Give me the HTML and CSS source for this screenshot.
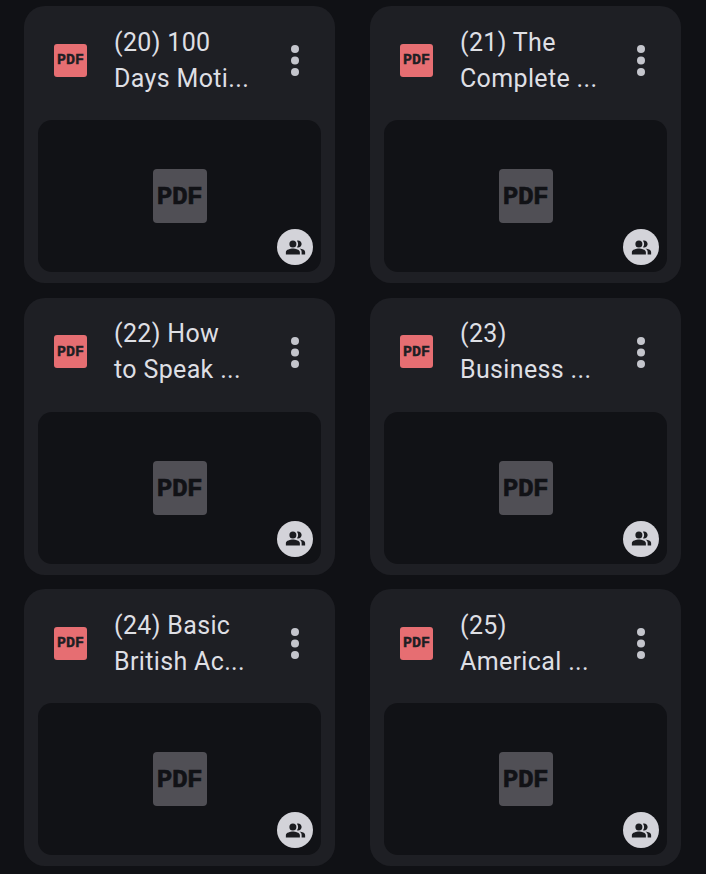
FILE: index.html
```html
<!DOCTYPE html>
<html lang="en">
<head>
<meta charset="utf-8">
<title>Files</title>
<link rel="stylesheet" href="styles.css">
</head>
<body>
<main class="grid">
  <article class="card">
    <header class="head">
      <span class="type-icon">PDF</span>
      <h2 class="title">(20) 100<br>Days Moti...</h2>
      <svg class="menu" viewBox="0 0 8 32"><circle cx="4" cy="4" r="4"/><circle cx="4" cy="15.5" r="4"/><circle cx="4" cy="27" r="4"/></svg>
    </header>
    <div class="thumb">
      <span class="thumb-icon">PDF</span>
      <span class="shared"><svg viewBox="0 0 24 24"><path d="M15 8c0-1.42-.5-2.73-1.33-3.76.42-.14.86-.24 1.33-.24 2.21 0 4 1.79 4 4s-1.79 4-4 4c-.43 0-.84-.09-1.23-.21-.03-.01-.06-.02-.1-.03A5.98 5.98 0 0 0 15 8zm1.66 5.13C18.03 14.06 19 15.32 19 17v3h4v-3c0-2.18-3.58-3.47-6.34-3.87zM9 4a4 4 0 1 0 0 8 4 4 0 0 0 0-8zm0 9c-2.67 0-8 1.34-8 4v3h16v-3c0-2.66-5.33-4-8-4z"/></svg></span>
    </div>
  </article>
  <article class="card">
    <header class="head">
      <span class="type-icon">PDF</span>
      <h2 class="title">(21) The<br>Complete ...</h2>
      <svg class="menu" viewBox="0 0 8 32"><circle cx="4" cy="4" r="4"/><circle cx="4" cy="15.5" r="4"/><circle cx="4" cy="27" r="4"/></svg>
    </header>
    <div class="thumb">
      <span class="thumb-icon">PDF</span>
      <span class="shared"><svg viewBox="0 0 24 24"><path d="M15 8c0-1.42-.5-2.73-1.33-3.76.42-.14.86-.24 1.33-.24 2.21 0 4 1.79 4 4s-1.79 4-4 4c-.43 0-.84-.09-1.23-.21-.03-.01-.06-.02-.1-.03A5.98 5.98 0 0 0 15 8zm1.66 5.13C18.03 14.06 19 15.32 19 17v3h4v-3c0-2.18-3.58-3.47-6.34-3.87zM9 4a4 4 0 1 0 0 8 4 4 0 0 0 0-8zm0 9c-2.67 0-8 1.34-8 4v3h16v-3c0-2.66-5.33-4-8-4z"/></svg></span>
    </div>
  </article>
  <article class="card">
    <header class="head">
      <span class="type-icon">PDF</span>
      <h2 class="title">(22) How<br>to Speak ...</h2>
      <svg class="menu" viewBox="0 0 8 32"><circle cx="4" cy="4" r="4"/><circle cx="4" cy="15.5" r="4"/><circle cx="4" cy="27" r="4"/></svg>
    </header>
    <div class="thumb">
      <span class="thumb-icon">PDF</span>
      <span class="shared"><svg viewBox="0 0 24 24"><path d="M15 8c0-1.42-.5-2.73-1.33-3.76.42-.14.86-.24 1.33-.24 2.21 0 4 1.79 4 4s-1.79 4-4 4c-.43 0-.84-.09-1.23-.21-.03-.01-.06-.02-.1-.03A5.98 5.98 0 0 0 15 8zm1.66 5.13C18.03 14.06 19 15.32 19 17v3h4v-3c0-2.18-3.58-3.47-6.34-3.87zM9 4a4 4 0 1 0 0 8 4 4 0 0 0 0-8zm0 9c-2.67 0-8 1.34-8 4v3h16v-3c0-2.66-5.33-4-8-4z"/></svg></span>
    </div>
  </article>
  <article class="card">
    <header class="head">
      <span class="type-icon">PDF</span>
      <h2 class="title">(23)<br>Business ...</h2>
      <svg class="menu" viewBox="0 0 8 32"><circle cx="4" cy="4" r="4"/><circle cx="4" cy="15.5" r="4"/><circle cx="4" cy="27" r="4"/></svg>
    </header>
    <div class="thumb">
      <span class="thumb-icon">PDF</span>
      <span class="shared"><svg viewBox="0 0 24 24"><path d="M15 8c0-1.42-.5-2.73-1.33-3.76.42-.14.86-.24 1.33-.24 2.21 0 4 1.79 4 4s-1.79 4-4 4c-.43 0-.84-.09-1.23-.21-.03-.01-.06-.02-.1-.03A5.98 5.98 0 0 0 15 8zm1.66 5.13C18.03 14.06 19 15.32 19 17v3h4v-3c0-2.18-3.58-3.47-6.34-3.87zM9 4a4 4 0 1 0 0 8 4 4 0 0 0 0-8zm0 9c-2.67 0-8 1.34-8 4v3h16v-3c0-2.66-5.33-4-8-4z"/></svg></span>
    </div>
  </article>
  <article class="card">
    <header class="head">
      <span class="type-icon">PDF</span>
      <h2 class="title">(24) Basic<br>British Ac...</h2>
      <svg class="menu" viewBox="0 0 8 32"><circle cx="4" cy="4" r="4"/><circle cx="4" cy="15.5" r="4"/><circle cx="4" cy="27" r="4"/></svg>
    </header>
    <div class="thumb">
      <span class="thumb-icon">PDF</span>
      <span class="shared"><svg viewBox="0 0 24 24"><path d="M15 8c0-1.42-.5-2.73-1.33-3.76.42-.14.86-.24 1.33-.24 2.21 0 4 1.79 4 4s-1.79 4-4 4c-.43 0-.84-.09-1.23-.21-.03-.01-.06-.02-.1-.03A5.98 5.98 0 0 0 15 8zm1.66 5.13C18.03 14.06 19 15.32 19 17v3h4v-3c0-2.18-3.58-3.47-6.34-3.87zM9 4a4 4 0 1 0 0 8 4 4 0 0 0 0-8zm0 9c-2.67 0-8 1.34-8 4v3h16v-3c0-2.66-5.33-4-8-4z"/></svg></span>
    </div>
  </article>
  <article class="card">
    <header class="head">
      <span class="type-icon">PDF</span>
      <h2 class="title">(25)<br>Americal ...</h2>
      <svg class="menu" viewBox="0 0 8 32"><circle cx="4" cy="4" r="4"/><circle cx="4" cy="15.5" r="4"/><circle cx="4" cy="27" r="4"/></svg>
    </header>
    <div class="thumb">
      <span class="thumb-icon">PDF</span>
      <span class="shared"><svg viewBox="0 0 24 24"><path d="M15 8c0-1.42-.5-2.73-1.33-3.76.42-.14.86-.24 1.33-.24 2.21 0 4 1.79 4 4s-1.79 4-4 4c-.43 0-.84-.09-1.23-.21-.03-.01-.06-.02-.1-.03A5.98 5.98 0 0 0 15 8zm1.66 5.13C18.03 14.06 19 15.32 19 17v3h4v-3c0-2.18-3.58-3.47-6.34-3.87zM9 4a4 4 0 1 0 0 8 4 4 0 0 0 0-8zm0 9c-2.67 0-8 1.34-8 4v3h16v-3c0-2.66-5.33-4-8-4z"/></svg></span>
    </div>
  </article>
</main>
</body>
</html>
```
FILE: styles.css
```css
* {
  box-sizing: border-box;
}

html,
body {
  margin: 0;
  height: 874px;
  overflow: hidden;
  background: #101115;
}

.grid {
  display: grid;
  grid-template-columns: 311px 311px;
  grid-auto-rows: 277px;
  column-gap: 35px;
  row-gap: 14.5px;
  padding: 6px 0 0 24px;
}

.card {
  display: flex;
  flex-direction: column;
  padding: 0 14px 11px;
  background: #1e1f24;
  border-radius: 21px;
}

.head {
  display: flex;
  align-items: center;
  height: 114px;
  flex: none;
  padding: 0 22px 6px 16px;
}

.type-icon {
  display: flex;
  align-items: center;
  justify-content: center;
  width: 33px;
  height: 33px;
  flex: none;
  padding-top: 1px;
  border-radius: 3px;
  background: #e66e72;
  color: #1e1f24;
  font: 700 15px/1 "Liberation Mono", monospace;
  letter-spacing: 0;
  -webkit-text-stroke: 0.4px #1e1f24;
}

.title {
  flex: 1;
  margin: 1px 0 0 27px;
  color: #dedfe4;
  font: 400 25px/36px "Roboto", sans-serif;
  letter-spacing: 0.35px;
  white-space: nowrap;
}

.menu {
  width: 8px;
  height: 32px;
  flex: none;
  margin-top: 2px;
  fill: #c4c5cc;
}

.thumb {
  position: relative;
  display: flex;
  align-items: center;
  justify-content: center;
  flex: 1;
  background: #111216;
  border-radius: 14px;
}

.thumb-icon {
  display: flex;
  align-items: center;
  justify-content: center;
  width: 54px;
  height: 54px;
  padding-top: 2px;
  border-radius: 4px;
  background: #504f55;
  color: #111216;
  font: 700 26px/1 "Liberation Mono", monospace;
  letter-spacing: -0.4px;
  -webkit-text-stroke: 0.6px #111216;
}

.shared {
  position: absolute;
  right: 8px;
  bottom: 7px;
  display: flex;
  align-items: center;
  justify-content: center;
  width: 36px;
  height: 36px;
  border-radius: 50%;
  background: #d3d3d9;
}

.shared svg {
  width: 21px;
  height: 21px;
  fill: #1b1c20;
}
```
